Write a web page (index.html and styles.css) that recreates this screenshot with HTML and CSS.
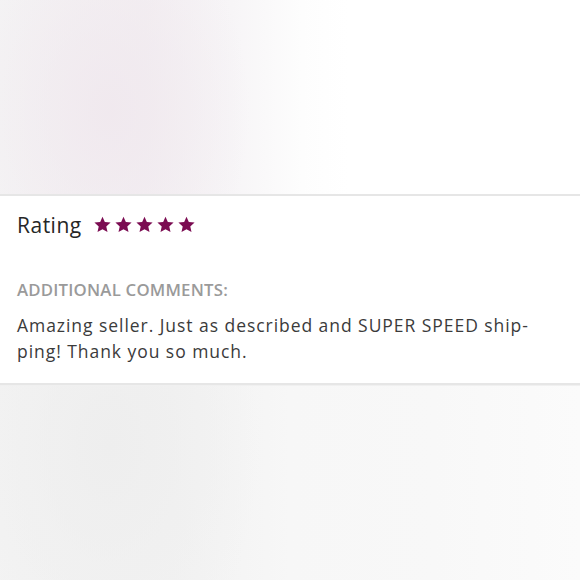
FILE: index.html
```html
<!DOCTYPE html>
<html>
<head>
<meta charset="utf-8">
<link rel="stylesheet" href="styles.css">
</head>
<body>
<div class="page">
  <div class="photo photo-top"></div>
  <section class="card">
    <div class="rating-row">
      <span class="rating-label">Rating</span>
      <span class="stars">
        <svg class="star" viewBox="0 0 24 24"><path d="M12 1L15.29 8.47 23.41 9.29 17.33 14.73 19.05 22.71 12 18.6 4.95 22.71 6.67 14.73 .59 9.29 8.71 8.47Z"/></svg>
        <svg class="star" viewBox="0 0 24 24"><path d="M12 1L15.29 8.47 23.41 9.29 17.33 14.73 19.05 22.71 12 18.6 4.95 22.71 6.67 14.73 .59 9.29 8.71 8.47Z"/></svg>
        <svg class="star" viewBox="0 0 24 24"><path d="M12 1L15.29 8.47 23.41 9.29 17.33 14.73 19.05 22.71 12 18.6 4.95 22.71 6.67 14.73 .59 9.29 8.71 8.47Z"/></svg>
        <svg class="star" viewBox="0 0 24 24"><path d="M12 1L15.29 8.47 23.41 9.29 17.33 14.73 19.05 22.71 12 18.6 4.95 22.71 6.67 14.73 .59 9.29 8.71 8.47Z"/></svg>
        <svg class="star" viewBox="0 0 24 24"><path d="M12 1L15.29 8.47 23.41 9.29 17.33 14.73 19.05 22.71 12 18.6 4.95 22.71 6.67 14.73 .59 9.29 8.71 8.47Z"/></svg>
      </span>
    </div>
    <div class="comments-label">ADDITIONAL COMMENTS:</div>
    <p class="comment">Amazing seller. Just as described and SUPER SPEED ship-<br>ping! Thank you so much.</p>
  </section>
  <div class="photo photo-bottom"></div>
</div>
</body>
</html>
```
FILE: styles.css
```css
html, body {
  margin: 0;
  padding: 0;
  background: #fff;
}
.page {
  width: 580px;
  height: 580px;
  overflow: hidden;
  display: flex;
  flex-direction: column;
  font-family: "Open Sans", Lato, sans-serif;
}
.photo {
  flex: none;
}
.photo-top {
  height: 194px;
  background:
    radial-gradient(ellipse 140px 200px at 110px 110px, rgba(240,232,238,0.9), rgba(240,232,238,0) 100%),
    linear-gradient(90deg, #f4f3f4 0%, #f3eff2 25%, #f7f5f7 40%, #fdfdfd 52%, #ffffff 60%, #ffffff 100%);
  border-bottom: 2px solid #e6e6e6;
}
.card {
  flex: none;
  background: #fff;
  padding: 0 17px;
  height: 189px;
  box-sizing: border-box;
  border-bottom: 2px solid #e6e6e6;
}
.rating-row {
  display: flex;
  align-items: center;
  gap: 12px;
  padding-top: 12px;
  height: 34px;
}
.rating-label {
  font-size: 21px;
  letter-spacing: 0.5px;
  color: #262626;
}
.stars {
  display: flex;
  gap: 4px;
  margin-top: -2px;
}
.star {
  width: 17px;
  height: 17px;
  fill: #7b0c52;
}
.comments-label {
  margin-top: 36px;
  font-size: 16.8px;
  font-weight: 600;
  color: #9a9a9a;
  letter-spacing: 0.2px;
}
.comment {
  margin: 11px 0 0;
  font-size: 17.5px;
  letter-spacing: 0.95px;
  line-height: 26px;
  color: #3b3b3b;
}
.photo-bottom {
  flex: 1;
  background:
    radial-gradient(ellipse 150px 240px at 110px 60px, rgba(238,238,238,1), rgba(238,238,238,0) 100%),
    linear-gradient(90deg, #f3f3f3 0%, #f2f2f2 30%, #f7f7f7 50%, #f8f8f8 75%, #fbfbfb 100%);
  border-top: 1px solid #f0f0f0;
}
```
